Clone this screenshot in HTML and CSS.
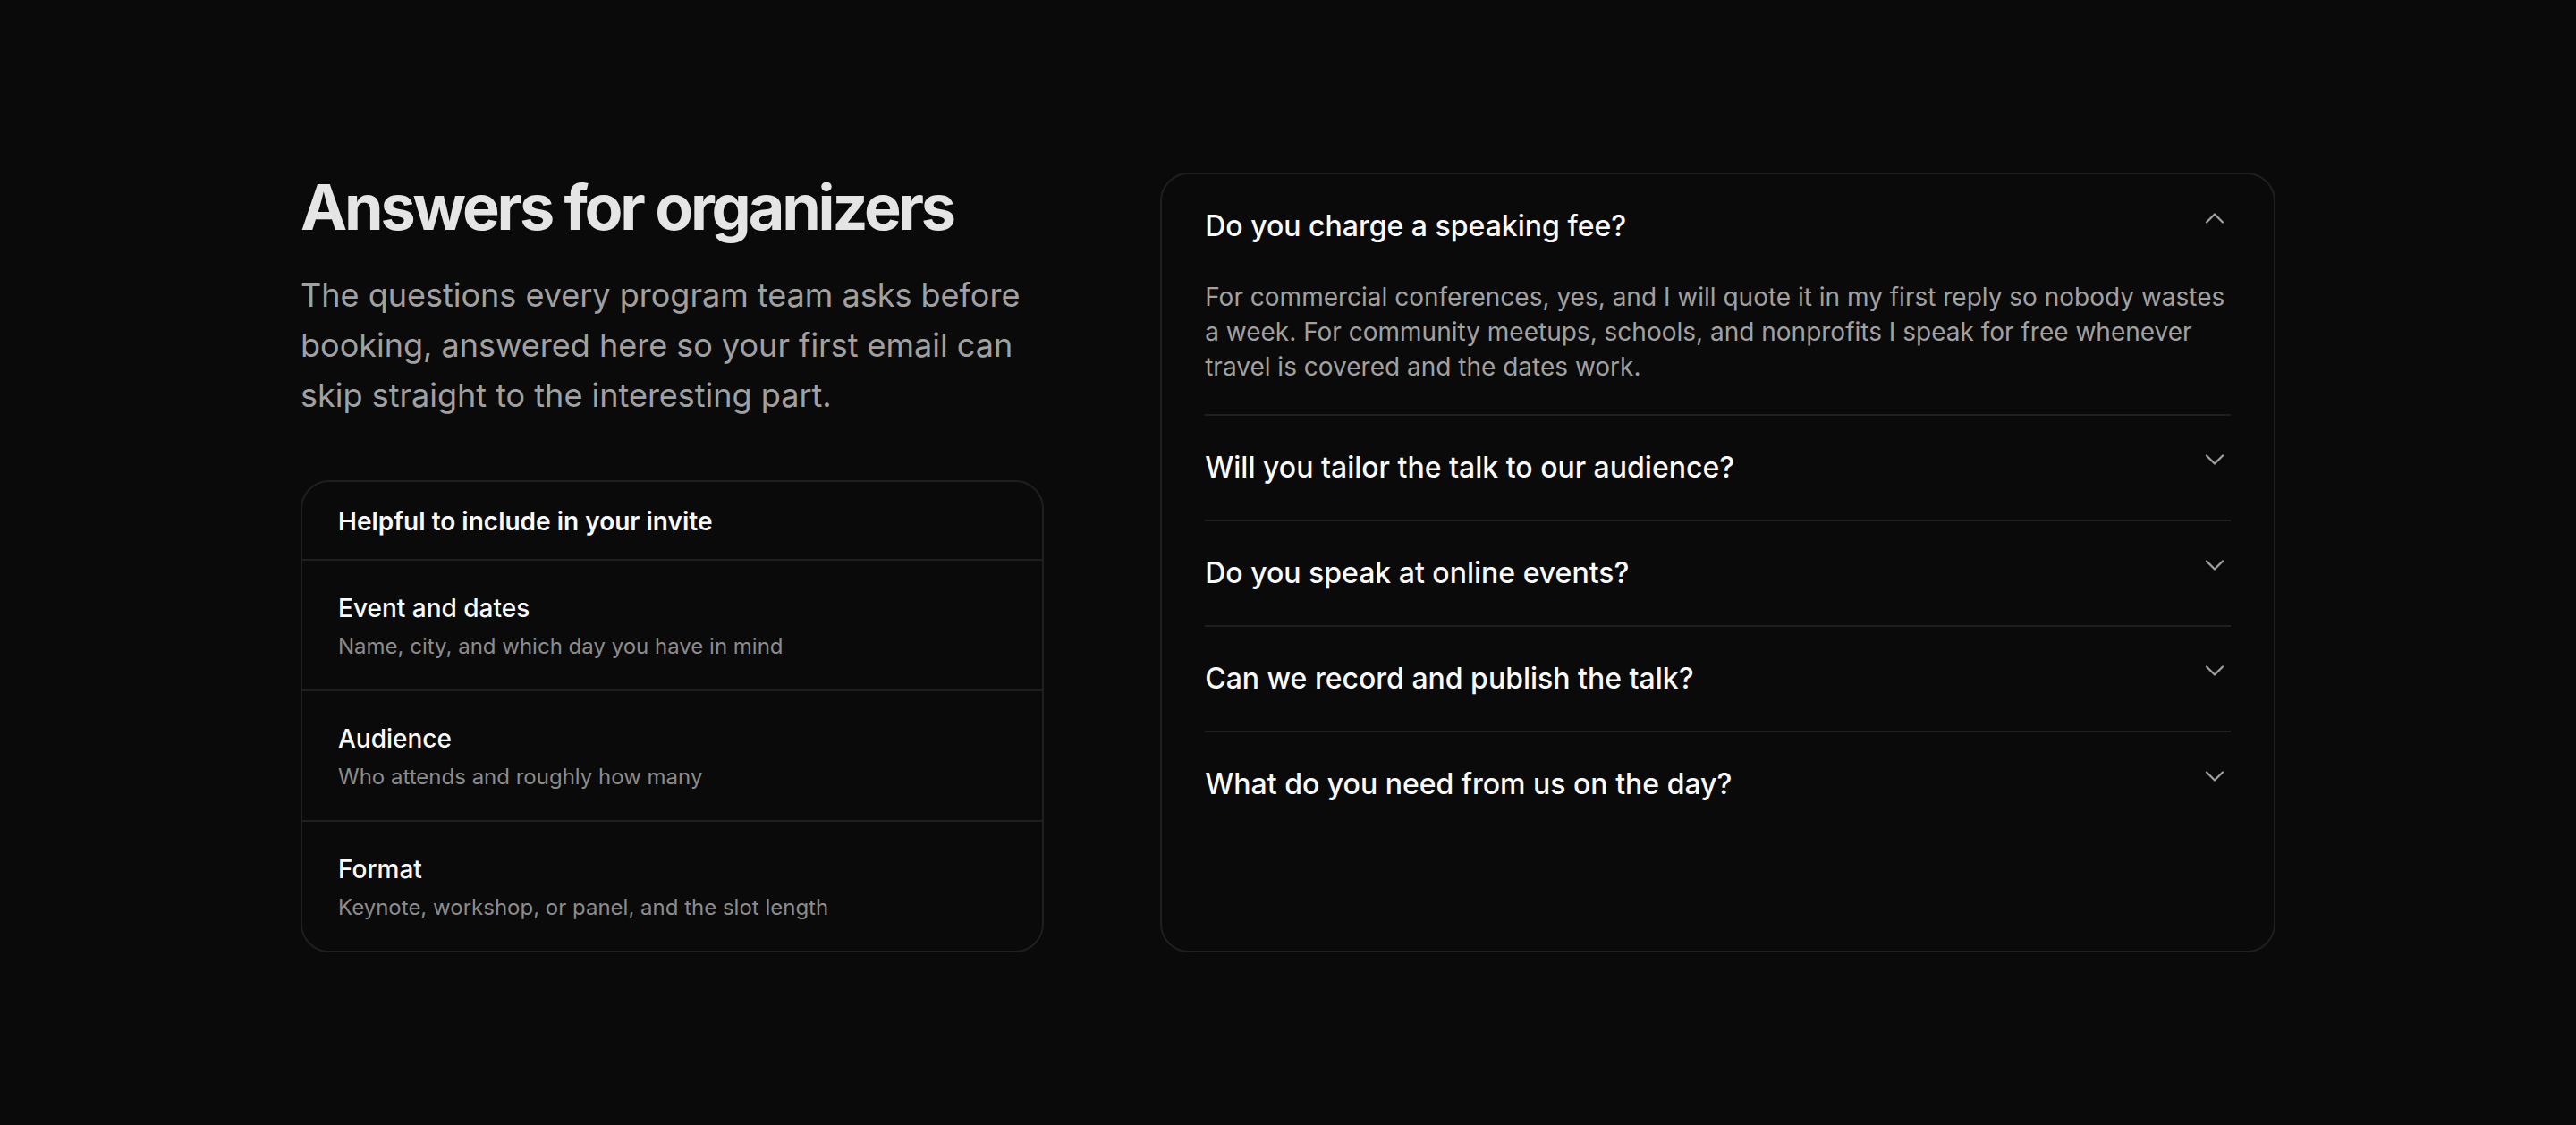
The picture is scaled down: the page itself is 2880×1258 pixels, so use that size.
FILE: index.html
```html
<!DOCTYPE html>
<html>
<head>
    <title>Answers for organizers</title>
    <link rel="stylesheet" href="styles.css">
</head>
<body>
    <section class="faq">
        <div class="intro">
            <h1>Answers for organizers</h1>
            <p class="lead">The questions every program team asks before booking, answered here so your first email can skip straight to the interesting part.</p>

            <div class="checklist">
                <div class="checklist-head">Helpful to include in your invite</div>
                <div class="checklist-row">
                    <div class="row-title">Event and dates</div>
                    <div class="row-sub">Name, city, and which day you have in mind</div>
                </div>
                <div class="checklist-row">
                    <div class="row-title">Audience</div>
                    <div class="row-sub">Who attends and roughly how many</div>
                </div>
                <div class="checklist-row">
                    <div class="row-title">Format</div>
                    <div class="row-sub">Keynote, workshop, or panel, and the slot length</div>
                </div>
            </div>
        </div>

        <div class="accordion">
            <div class="item open">
                <button class="question">
                    <span>Do you charge a speaking fee?</span>
                    <svg class="chevron" viewBox="0 0 24 24"><path d="m6 9 6 6 6-6"/></svg>
                </button>
                <div class="answer">For commercial conferences, yes, and I will quote it in my first reply so nobody wastes a week. For community meetups, schools, and nonprofits I speak for free whenever travel is covered and the dates work.</div>
            </div>
            <div class="item">
                <button class="question">
                    <span>Will you tailor the talk to our audience?</span>
                    <svg class="chevron" viewBox="0 0 24 24"><path d="m6 9 6 6 6-6"/></svg>
                </button>
                <div class="answer">Always. Before the event we do a short call about who is in the room, what they already know, and what you want them to leave with.</div>
            </div>
            <div class="item">
                <button class="question">
                    <span>Do you speak at online events?</span>
                    <svg class="chevron" viewBox="0 0 24 24"><path d="m6 9 6 6 6-6"/></svg>
                </button>
                <div class="answer">Yes. I have a proper camera, microphone and lighting setup and I am happy to do a tech check the week before.</div>
            </div>
            <div class="item">
                <button class="question">
                    <span>Can we record and publish the talk?</span>
                    <svg class="chevron" viewBox="0 0 24 24"><path d="m6 9 6 6 6-6"/></svg>
                </button>
                <div class="answer">Yes, as long as the slides are shared alongside it and the recording is free to watch.</div>
            </div>
            <div class="item">
                <button class="question">
                    <span>What do you need from us on the day?</span>
                    <svg class="chevron" viewBox="0 0 24 24"><path d="m6 9 6 6 6-6"/></svg>
                </button>
                <div class="answer">A screen with HDMI, a clip-on microphone, and a glass of water. Everything else I bring myself.</div>
            </div>
        </div>
    </section>

    <script>
        document.querySelectorAll(".question").forEach(function(btn) {
            btn.addEventListener("click", function() {
                this.parentNode.classList.toggle("open");
            });
        });
    </script>
</body>
</html>
```

FILE: styles.css
```css
body {
    margin: 0;
    padding: 0;
    background-color: #0a0a0a;
    color: #fafafa;
    font-family: Inter, "Noto Sans", sans-serif;
}
.faq {
    max-width: 2208px;
    margin: 0 auto;
    padding: 193px 0;
    display: grid;
    grid-template-columns: 2fr 3fr;
    column-gap: 130px;
}
h1 {
    margin: 0;
    font-size: 70px;
    line-height: 77px;
    font-weight: 700;
    letter-spacing: -0.045em;
    color: #e5e5e5;
}
.lead {
    margin: 32px 0 0;
    font-size: 36px;
    line-height: 56px;
    color: #a1a1a1;
}
.checklist {
    margin-top: 67px;
    border: 2px solid #1f1f1f;
    border-radius: 32px;
}
.checklist-head {
    padding: 24px 40px 22px;
    font-size: 28px;
    line-height: 40px;
    font-weight: 600;
}
.checklist-row {
    border-top: 2px solid #1f1f1f;
    padding: 33px 40px 30px;
}
.row-title {
    font-size: 28px;
    line-height: 40px;
    font-weight: 500;
}
.row-sub {
    margin-top: 5px;
    font-size: 24px;
    line-height: 36px;
    color: #8c8c8c;
}
.accordion {
    border: 2px solid #1f1f1f;
    border-radius: 32px;
    padding: 0 48px;
}
.item {
    border-bottom: 2px solid #1f1f1f;
}
.item:last-child {
    border-bottom: none;
}
.question {
    width: 100%;
    display: flex;
    justify-content: space-between;
    align-items: flex-start;
    padding: 37px 0;
    background: none;
    border: none;
    color: #fafafa;
    font-family: inherit;
    font-size: 32px;
    line-height: 42px;
    font-weight: 500;
    text-align: left;
    cursor: pointer;
}
.chevron {
    width: 36px;
    height: 36px;
    margin-top: -6px;
    flex-shrink: 0;
    fill: none;
    stroke: #a1a1a1;
    stroke-width: 1.5;
    stroke-linecap: round;
    stroke-linejoin: round;
}
.item.open .chevron {
    transform: rotate(180deg);
}
.answer {
    display: none;
    margin-top: 2px;
    padding-bottom: 32px;
    font-size: 28px;
    line-height: 39.2px;
    color: #a1a1a1;
}
.item.open .answer {
    display: block;
}
```
